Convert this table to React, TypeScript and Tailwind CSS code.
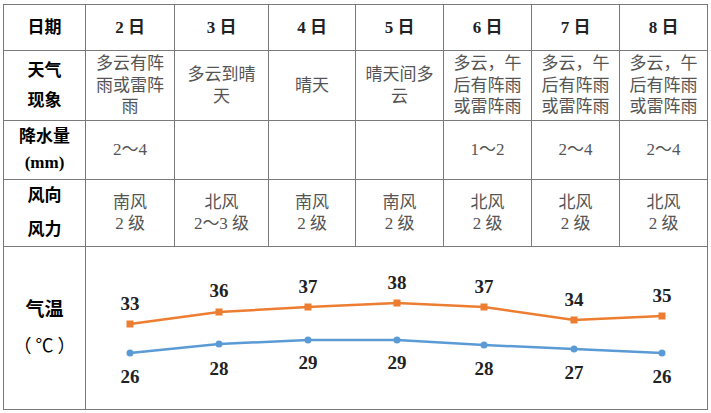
import React from 'react';

const FONT = '"Liberation Serif", "Noto Sans CJK SC", serif';

const days = ['2 日', '3 日', '4 日', '5 日', '6 日', '7 日', '8 日'];

const weather = [
    ['多云有阵', '雨或雷阵', '雨'],
    ['多云到晴', '天'],
    ['晴天'],
    ['晴天间多', '云'],
    ['多云，午', '后有阵雨', '或雷阵雨'],
    ['多云，午', '后有阵雨', '或雷阵雨'],
    ['多云，午', '后有阵雨', '或雷阵雨'],
];

const rain = ['2～4', '', '', '', '1～2', '2～4', '2～4'];

const wind = [
    ['南风', '2 级'],
    ['北风', '2～3 级'],
    ['南风', '2 级'],
    ['南风', '2 级'],
    ['北风', '2 级'],
    ['北风', '2 级'],
    ['北风', '2 级'],
];

// chart points, relative to the merged chart cell
const xs = [44, 133, 222, 311, 398, 488, 576];
const high = [33, 36, 37, 38, 37, 34, 35];
const highY = [77, 65, 60, 56, 60, 73, 69];
const highLabelY = [56, 43, 39, 35, 39, 52, 48];
const low = [26, 28, 29, 29, 28, 27, 26];
const lowY = [106, 97, 93, 93, 98, 102, 106];
const lowLabelY = [129, 121, 115, 115, 121, 125, 129];

function Head({ children }: { children: React.ReactNode }) {
    return (
        <div className="bg-white flex flex-col items-center justify-center text-[17px] font-bold text-black">
            {children}
        </div>
    );
}

function Cell({ lines }: { lines: string[] }) {
    return (
        <div className="bg-white flex flex-col items-center justify-center text-[17px] leading-[21.5px] text-[#555]">
            {lines.map((l, i) => (
                <span key={i}>{l}</span>
            ))}
        </div>
    );
}

function TempChart() {
    const highPts = xs.map((x, i) => `${x},${highY[i]}`).join(' ');
    const lowPts = xs.map((x, i) => `${x},${lowY[i]}`).join(' ');
    return (
        <svg width="621" height="162" viewBox="0 0 621 162">
            <polyline points={highPts} fill="none" stroke="#ED7D31" strokeWidth="2.5" />
            <polyline points={lowPts} fill="none" stroke="#5B9BD5" strokeWidth="2.5" />
            {xs.map((x, i) => (
                <rect key={'h' + i} x={x - 3.5} y={highY[i] - 3.5} width="7" height="7" fill="#ED7D31" />
            ))}
            {xs.map((x, i) => (
                <circle key={'l' + i} cx={x} cy={lowY[i]} r="3.5" fill="#5B9BD5" />
            ))}
            {xs.map((x, i) => (
                <text key={'ht' + i} x={x} y={highLabelY[i]} textAnchor="middle" dominantBaseline="central" fontSize="19" fontWeight="bold" fill="#222" fontFamily={FONT}>
                    {high[i]}
                </text>
            ))}
            {xs.map((x, i) => (
                <text key={'lt' + i} x={x} y={lowLabelY[i]} textAnchor="middle" dominantBaseline="central" fontSize="19" fontWeight="bold" fill="#222" fontFamily={FONT}>
                    {low[i]}
                </text>
            ))}
        </svg>
    );
}

export default function App() {
    return (
        <div className="w-[711px] h-[413px] bg-white pt-[4px] pl-[3px]" style={{ fontFamily: FONT }}>
            <div className="inline-grid grid-cols-[81px_88px_93px_86px_87px_87px_87px_87px] grid-rows-[45px_69px_58px_66px_162px] gap-px p-px bg-[#7a7a7a]">
                {/* date row */}
                <Head>日期</Head>
                {days.map((d) => (
                    <div key={d} className="bg-white flex items-center justify-center text-[17px] font-bold text-[#222]">
                        {d}
                    </div>
                ))}

                {/* weather row */}
                <Head>
                    <span className="leading-[30px]">天气</span>
                    <span className="leading-[30px]">现象</span>
                </Head>
                {weather.map((w, i) => (
                    <Cell key={i} lines={w} />
                ))}

                {/* rain row */}
                <Head>
                    <span className="leading-[26px]">降水量</span>
                    <span className="leading-[26px]">(mm)</span>
                </Head>
                {rain.map((r, i) => (
                    <Cell key={i} lines={r ? [r] : []} />
                ))}

                {/* wind row */}
                <Head>
                    <span className="leading-[34px]">风向</span>
                    <span className="leading-[34px]">风力</span>
                </Head>
                {wind.map((w, i) => (
                    <Cell key={i} lines={w} />
                ))}

                {/* temperature row */}
                <div className="bg-white flex flex-col items-center justify-center text-black">
                    <span className="text-[19px] font-bold leading-[37px]">气温</span>
                    <span className="text-[18px] leading-[37px] tracking-[4px] pl-[4px]">（℃）</span>
                </div>
                <div className="col-span-7 bg-white">
                    <TempChart />
                </div>
            </div>
        </div>
    );
}
